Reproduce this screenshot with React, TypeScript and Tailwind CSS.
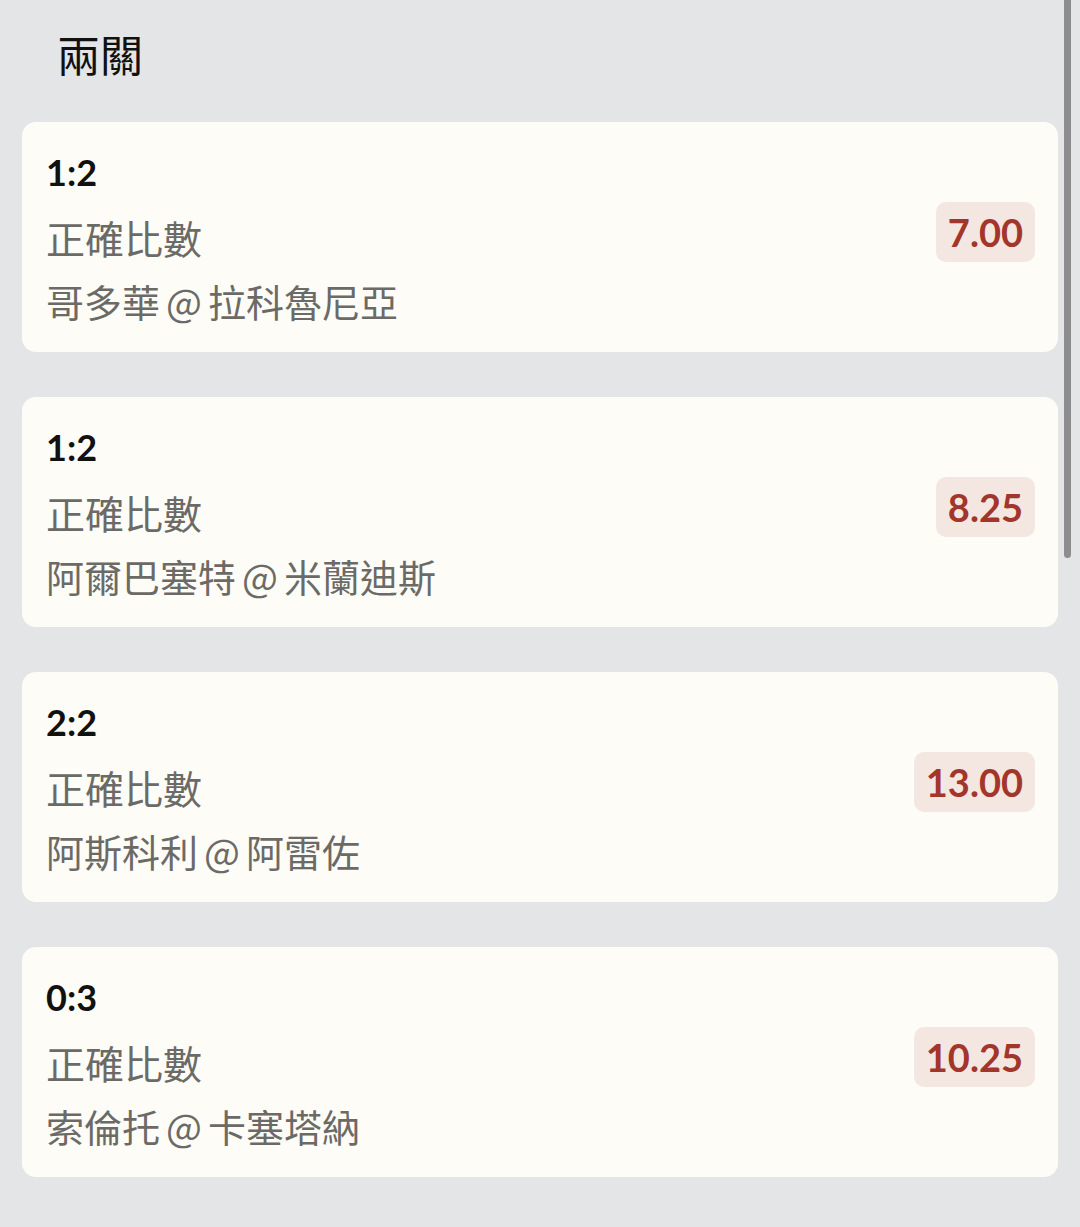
interface Bet {
  score: string
  market: string
  home: string
  away: string
  odds: string
}

const bets: Bet[] = [
  { score: "1:2", market: "正確比數", home: "哥多華", away: "拉科魯尼亞", odds: "7.00" },
  { score: "1:2", market: "正確比數", home: "阿爾巴塞特", away: "米蘭迪斯", odds: "8.25" },
  { score: "2:2", market: "正確比數", home: "阿斯科利", away: "阿雷佐", odds: "13.00" },
  { score: "0:3", market: "正確比數", home: "索倫托", away: "卡塞塔納", odds: "10.25" },
]

const cjk = { fontFamily: '"Noto Sans CJK TC", sans-serif' }

const BetCard = ({ score, market, home, away, odds }: Bet) => {
  return (
    <div className="flex items-start justify-between rounded-[14px] bg-[#fdfcf6] pl-[24px] pr-[23px] pt-[26px] pb-[19px]">
      <div className="flex flex-col">
        <div className="text-[36px] leading-[48px] font-bold text-[#111111]">{score}</div>
        <div className="mt-[9px] text-[39px] leading-[64px] text-[#6b6a66]" style={cjk}>
          {market}
        </div>
        <div className="flex text-[38px] leading-[64px] text-[#6b6a66]" style={cjk}>
          <span>{home}</span>
          <span className="mx-[6px]">@</span>
          <span>{away}</span>
        </div>
      </div>
      <div className="mt-[54px] flex h-[60px] items-center rounded-[10px] bg-[#f4e7e1] px-[12px] text-[38px] font-bold text-[#a2362b]">
        {odds}
      </div>
    </div>
  )
}

const App = () => {
  return (
    <div
      className="relative min-h-screen bg-[#e4e5e7] px-[22px] pb-[50px]"
      style={{ fontFamily: 'Lato, "Noto Sans CJK TC", sans-serif' }}
    >
      <header className="pt-[24px] pb-[40px] pl-[35px]">
        <h1 className="text-[43px] leading-[58px] font-normal text-[#111111]" style={cjk}>
          兩關
        </h1>
      </header>
      <div className="flex flex-col gap-[45px]">
        {bets.map((b, i) => (
          <BetCard key={i} {...b} />
        ))}
      </div>
      <div className="absolute right-[9px] top-0 h-[558px] w-[7px] rounded-b-full bg-[#8d8d90]" />
    </div>
  )
}

export default App
